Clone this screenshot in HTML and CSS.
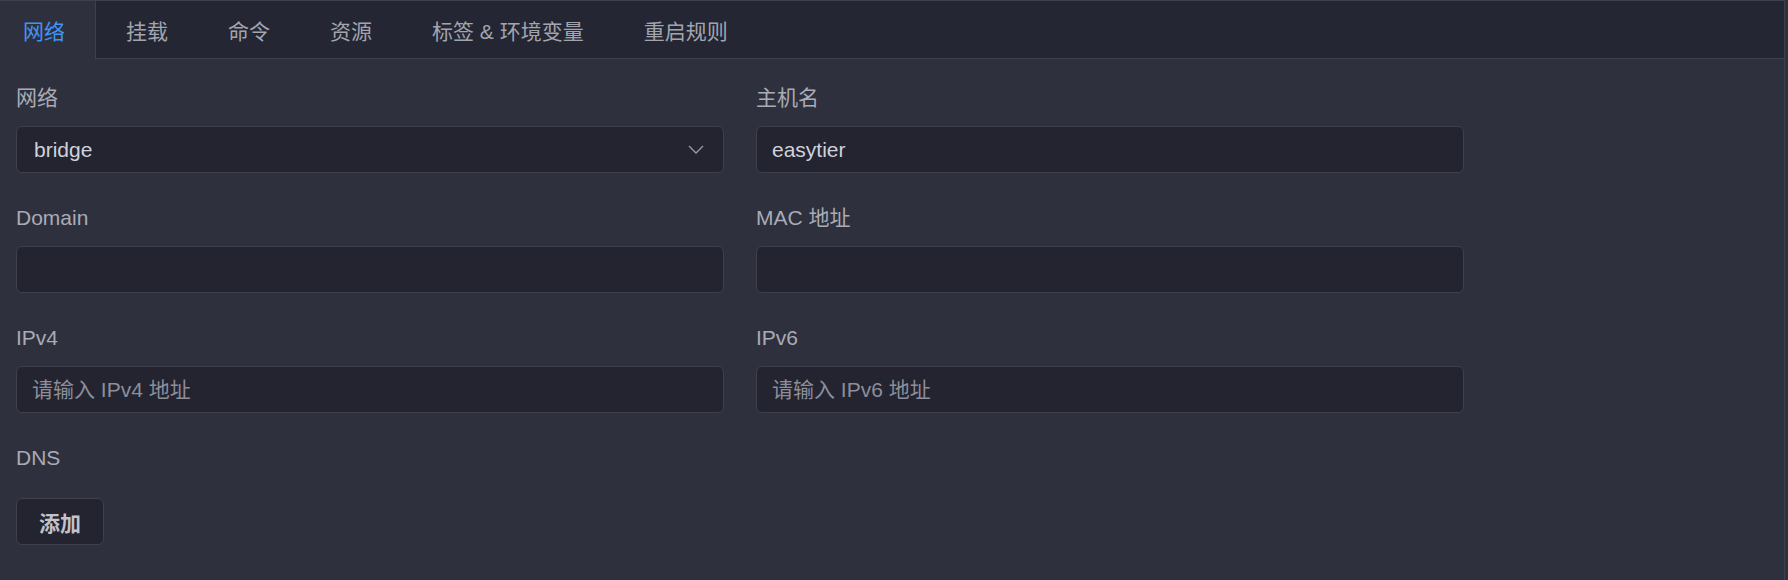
FILE: index.html
```html
<!DOCTYPE html>
<html lang="zh-CN">
<head>
  <meta charset="UTF-8" />
  <meta name="viewport" content="width=device-width, initial-scale=1.0"/>
  <title>容器网络设置</title>
  <link rel="stylesheet" href="styles.css">
</head>
<body>
  <div class="card">
    <div class="tab-bar">
      <div class="tab active">网络</div>
      <div class="tab">挂载</div>
      <div class="tab">命令</div>
      <div class="tab">资源</div>
      <div class="tab">标签 &amp; 环境变量</div>
      <div class="tab">重启规则</div>
    </div>

    <div class="tab-content">
      <form class="form-grid">
        <div class="form-item">
          <label class="form-label">网络</label>
          <div class="select">
            <span>bridge</span>
            <svg class="chevron" width="16" height="9" viewBox="0 0 16 9">
              <path d="M1 1 L8 8 L15 1" fill="none" stroke="#9a9da8" stroke-width="1.3"/>
            </svg>
          </div>
        </div>
        <div class="form-item">
          <label class="form-label">主机名</label>
          <input class="input" type="text" value="easytier" />
        </div>

        <div class="form-item">
          <label class="form-label">Domain</label>
          <input class="input" type="text" />
        </div>
        <div class="form-item">
          <label class="form-label">MAC 地址</label>
          <input class="input" type="text" />
        </div>

        <div class="form-item">
          <label class="form-label">IPv4</label>
          <input class="input" type="text" placeholder="请输入 IPv4 地址" />
        </div>
        <div class="form-item">
          <label class="form-label">IPv6</label>
          <input class="input" type="text" placeholder="请输入 IPv6 地址" />
        </div>

        <div class="form-item">
          <label class="form-label dns-label">DNS</label>
          <button type="button" class="btn">添加</button>
        </div>
      </form>
    </div>
  </div>
</body>
</html>
```

FILE: styles.css
```css
* {
  box-sizing: border-box;
}

body {
  margin: 0;
  background-color: #2f303d;
  font-family: "Liberation Sans", "Noto Sans CJK SC", sans-serif;
  font-size: 21px;
  color: #a9abb5;
}

.card {
  width: 1785px;
  min-height: 580px;
  border-top: 1px solid #3e404e;
  border-right: 1px solid #3e404e;
  background-color: #2f303d;
}

.tab-bar {
  display: flex;
  height: 58px;
  background-color: #252633;
  border-bottom: 1px solid #3e404e;
}

.tab {
  display: flex;
  align-items: center;
  padding: 0 30px;
  color: #a2a5ae;
  white-space: nowrap;
  cursor: pointer;
}

.tab:first-child {
  padding-left: 23px;
}

.tab.active {
  color: #3f95f5;
  background-color: #2f303d;
  border-right: 1px solid #3e404e;
  height: 58px;
  margin-bottom: -1px;
}

.tab-content {
  padding: 24px 16px 0;
}

.form-grid {
  display: grid;
  grid-template-columns: 708px 708px;
  column-gap: 32px;
  row-gap: 30px;
}

.form-item {
  display: flex;
  flex-direction: column;
  align-items: flex-start;
}

.form-label {
  line-height: 30px;
  margin-bottom: 13px;
  color: #a9abb5;
}

.dns-label {
  margin-bottom: 25px;
}

.select,
.input {
  width: 100%;
  height: 47px;
  background-color: #232430;
  border: 1px solid #3e404e;
  border-radius: 6px;
  color: #cfd2db;
  font-family: inherit;
  font-size: 21px;
}

.select {
  display: flex;
  align-items: center;
  justify-content: space-between;
  padding: 0 19px 0 17px;
}

.input {
  padding: 0 15px;
  outline: none;
}

.input::placeholder {
  color: #8c8e9a;
}

.btn {
  height: 47px;
  padding: 0 22px;
  background-color: #232430;
  border: 1px solid #3e404e;
  border-radius: 6px;
  color: #c0c3cc;
  font-family: inherit;
  font-size: 21px;
  font-weight: bold;
  cursor: pointer;
}
```
